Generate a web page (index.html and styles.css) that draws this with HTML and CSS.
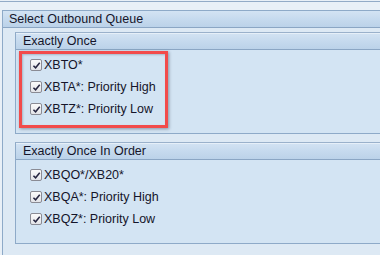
FILE: index.html
```html
<!DOCTYPE html>
<html>
<head>
    <meta charset="UTF-8">
    <title>Select Outbound Queue</title>
    <link rel="stylesheet" href="styles.css">
</head>
<body>
    <div class="topbar"></div>
    <div class="group outer">
        <div class="group-header">Select Outbound Queue</div>
        <div class="group-body">
            <div class="group inner marked">
                <div class="group-header">Exactly Once</div>
                <div class="group-body rows">
                    <label class="row"><span class="check"><svg viewBox="0 0 10 10"><path d="M1.6 5.2 L4 7.6 L8.6 2"/></svg></span>XBTO*</label>
                    <label class="row"><span class="check"><svg viewBox="0 0 10 10"><path d="M1.6 5.2 L4 7.6 L8.6 2"/></svg></span>XBTA*: Priority High</label>
                    <label class="row"><span class="check"><svg viewBox="0 0 10 10"><path d="M1.6 5.2 L4 7.6 L8.6 2"/></svg></span>XBTZ*: Priority Low</label>
                </div>
                <div class="highlight"></div>
            </div>
            <div class="group inner">
                <div class="group-header">Exactly Once In Order</div>
                <div class="group-body rows">
                    <label class="row"><span class="check"><svg viewBox="0 0 10 10"><path d="M1.6 5.2 L4 7.6 L8.6 2"/></svg></span>XBQO*/XB20*</label>
                    <label class="row"><span class="check"><svg viewBox="0 0 10 10"><path d="M1.6 5.2 L4 7.6 L8.6 2"/></svg></span>XBQA*: Priority High</label>
                    <label class="row"><span class="check"><svg viewBox="0 0 10 10"><path d="M1.6 5.2 L4 7.6 L8.6 2"/></svg></span>XBQZ*: Priority Low</label>
                </div>
            </div>
        </div>
    </div>
</body>
</html>
```

FILE: styles.css
```css
body {
    margin: 0;
    overflow: hidden;
    background-color: #e9f0f7;
    font-family: "Liberation Sans", Arial, sans-serif;
    font-size: 12.5px;
    color: #15152a;
}

.topbar {
    margin-top: 1px;
    height: 8px;
    border-top: 1px solid #93abc7;
    background-color: #e9f0f7;
}

.group {
    border: 1px solid #8eaac8;
    border-right: none;
}

.group-header {
    height: 16px;
    line-height: 16px;
    border-bottom: 1px solid #8ba6c4;
    background: linear-gradient(to bottom, #d3e3f3 0%, #c6daee 50%, #bbd2e9 100%);
    white-space: nowrap;
}

.outer {
    margin-left: 2px;
    border-bottom: none;
    background-color: #dde9f4;
}

    .outer > .group-header {
        padding-left: 6px;
    }

    .outer > .group-body {
        padding: 4px 0 3px 12px;
    }

.inner {
    position: relative;
    margin-bottom: 8px;
    background-color: #d3e4f3;
    border-top-color: #9ab1cb;
}

    .inner > .group-header {
        padding-left: 7px;
        box-shadow: inset 0 1px 0 #e6eff8;
    }

.rows {
    display: flex;
    flex-direction: column;
    padding: 4px 0 13px 14px;
}

.row {
    display: flex;
    align-items: center;
    gap: 2px;
    height: 22px;
    white-space: nowrap;
}

.check {
    display: flex;
    align-items: center;
    justify-content: center;
    box-sizing: border-box;
    width: 12px;
    height: 12px;
    border: 1px solid #8a8b94;
    border-radius: 2px;
    background: linear-gradient(to bottom, #fbfbfb, #e3e4e8);
}

    .check svg {
        width: 9px;
        height: 9px;
        fill: none;
        stroke: #262640;
        stroke-width: 1.7;
    }

.highlight {
    position: absolute;
    left: 3px;
    top: 18px;
    box-sizing: border-box;
    width: 149px;
    height: 77px;
    border: 3px solid #f24b4b;
    box-shadow: 1px 1px 3px rgba(40, 50, 70, 0.45), inset 1px 1px 2px rgba(40, 50, 70, 0.25);
}
```
